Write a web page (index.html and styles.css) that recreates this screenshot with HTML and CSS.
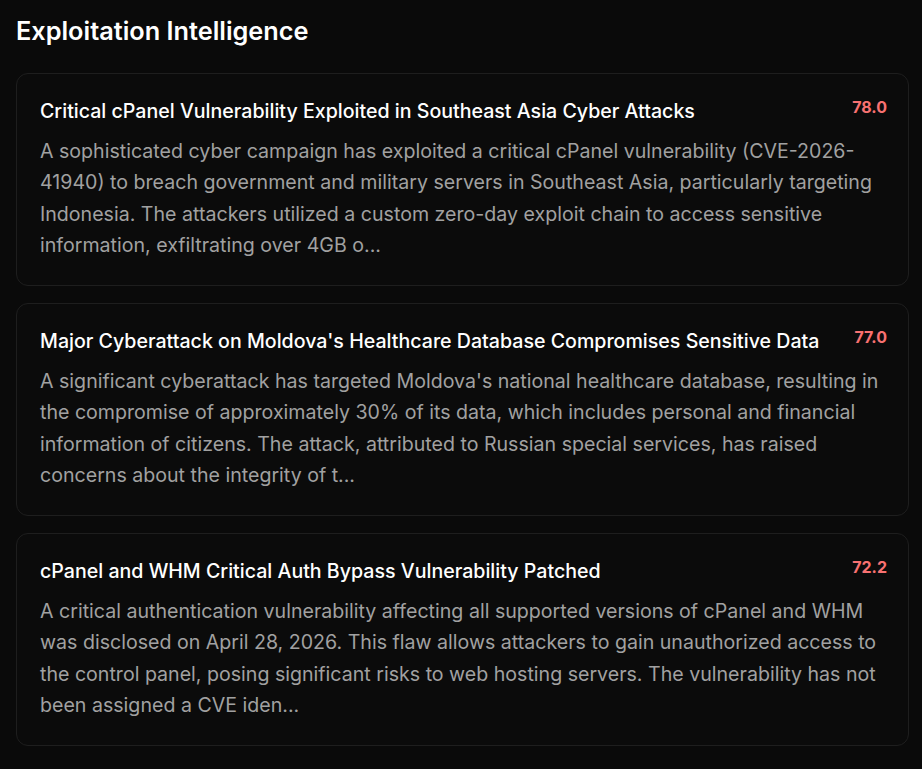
FILE: index.html
```
<!DOCTYPE html>
<html lang="en">
<head>
<meta charset="utf-8">
<title>Exploitation Intelligence</title>
<link rel="stylesheet" href="styles.css">
</head>
<body>
<main class="page">
  <h1 class="heading">Exploitation Intelligence</h1>
  <section class="list">
    <article class="card">
      <div class="card-head">
        <h2 class="title">Critical cPanel Vulnerability Exploited in Southeast Asia Cyber Attacks</h2>
        <span class="score">78.0</span>
      </div>
      <p class="desc">A sophisticated cyber campaign has exploited a critical cPanel vulnerability (CVE-2026-41940) to breach government and military servers in Southeast Asia, particularly targeting Indonesia. The attackers utilized a custom zero-day exploit chain to access sensitive information, exfiltrating over 4GB o...</p>
    </article>
    <article class="card">
      <div class="card-head">
        <h2 class="title">Major Cyberattack on Moldova's Healthcare Database Compromises Sensitive Data</h2>
        <span class="score">77.0</span>
      </div>
      <p class="desc">A significant cyberattack has targeted Moldova's national healthcare database, resulting in the compromise of approximately 30% of its data, which includes personal and financial information of citizens. The attack, attributed to Russian special services, has raised concerns about the integrity of t...</p>
    </article>
    <article class="card">
      <div class="card-head">
        <h2 class="title">cPanel and WHM Critical Auth Bypass Vulnerability Patched</h2>
        <span class="score">72.2</span>
      </div>
      <p class="desc">A critical authentication vulnerability affecting all supported versions of cPanel and WHM was disclosed on April 28, 2026. This flaw allows attackers to gain unauthorized access to the control panel, posing significant risks to web hosting servers. The vulnerability has not been assigned a CVE iden...</p>
    </article>
  </section>
</main>
</body>
</html>
```

FILE: styles.css
```
html, body {
  margin: 0;
  padding: 0;
  background: #0a0a0a;
}
body {
  font-family: Inter, "Noto Sans", sans-serif;
  color: #fafafa;
}
.page {
  padding: 14px 13px 16px 16px;
}
.heading {
  margin: 0 0 26px 0;
  font-size: 25.3px;
  line-height: 33px;
  font-weight: 600;
  color: #ffffff;
}
.list {
  display: flex;
  flex-direction: column;
  gap: 17px;
}
.card {
  border: 1px solid #1e1e1e;
  border-radius: 12px;
  background: #0b0b0b;
  padding: 23px 21px 24px 23px;
}
.card-head {
  display: flex;
  align-items: flex-start;
  justify-content: space-between;
  gap: 16px;
}
.title {
  margin: 0;
  font-size: 19.6px;
  line-height: 28px;
  font-weight: 500;
  color: #ffffff;
}
.score {
  flex: none;
  font-size: 16px;
  line-height: 20px;
  font-weight: 700;
  color: #f87171;
}
.desc {
  margin: 11px 0 0 0;
  font-size: 19.6px;
  line-height: 31.25px;
  color: #a1a1a1;
}
```
